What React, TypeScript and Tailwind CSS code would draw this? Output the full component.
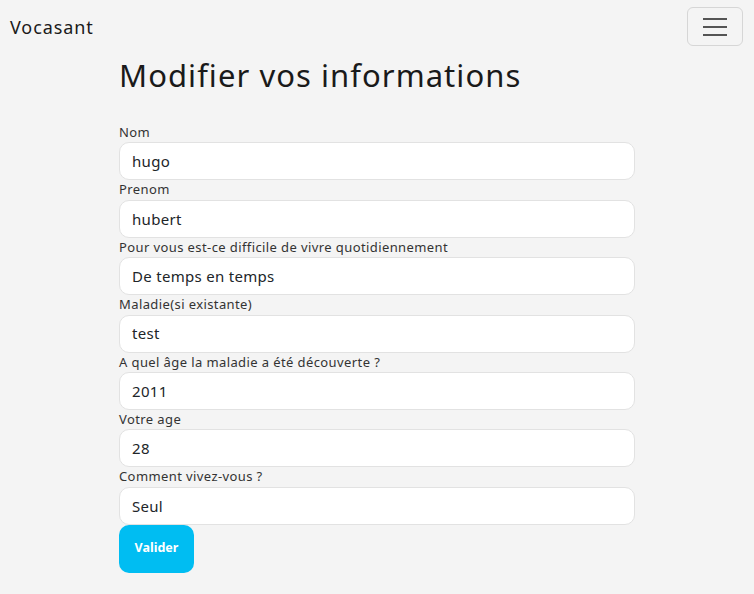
import React from "react";

const fields: { label: string; value: string }[] = [
  { label: "Nom", value: "hugo" },
  { label: "Prenom", value: "hubert" },
  { label: "Pour vous est-ce difficile de vivre quotidiennement", value: "De temps en temps" },
  { label: "Maladie(si existante)", value: "test" },
  { label: "A quel âge la maladie a été découverte ?", value: "2011" },
  { label: "Votre age", value: "28" },
  { label: "Comment vivez-vous ?", value: "Seul" },
];

export default function App() {
  return (
    <div
      className="min-h-[594px] bg-[#f4f4f4] text-[#212529]"
      style={{ fontFamily: '"Noto Sans", "Open Sans", sans-serif' }}
    >
      <nav className="flex items-center justify-between pl-[10px] pr-[11px] pt-[7px] pb-[7px]">
        <span className="text-[18px] leading-[24px] tracking-[0.9px] text-[#1a1a1a]">Vocasant</span>
        <button className="flex h-[39px] w-[56px] flex-col items-center justify-center gap-[6px] rounded-[6px] border border-[#d6d6d6]">
          <span className="block h-[2px] w-[24px] bg-[#555]" />
          <span className="block h-[2px] w-[24px] bg-[#555]" />
          <span className="block h-[2px] w-[24px] bg-[#555]" />
        </button>
      </nav>
      <div className="mx-auto w-[516px]">
        <h2 className="mt-[0px] text-[31px] leading-[44px] tracking-[1.05px] font-normal text-[#1a1a1a]">
          Modifier vos informations
        </h2>
        <form className="mt-[26px] flex flex-col">
          {fields.map((f) => (
            <div key={f.label} className="flex flex-col">
              <label className="text-[13px] leading-[19.4px] tracking-[0.4px] text-[#333]">{f.label}</label>
              <div className="flex h-[38px] items-center rounded-[10px] border border-[#e2e2e2] bg-white px-[12px] text-[15px] tracking-[0.3px] text-[#212529]">
                {f.value}
              </div>
            </div>
          ))}
          <button
            type="button"
            className="mt-0 h-[48px] w-[75px] rounded-[10px] bg-[#00bdf2] text-[12.5px] font-bold text-white"
          >
            Valider
          </button>
        </form>
      </div>
    </div>
  );
}
